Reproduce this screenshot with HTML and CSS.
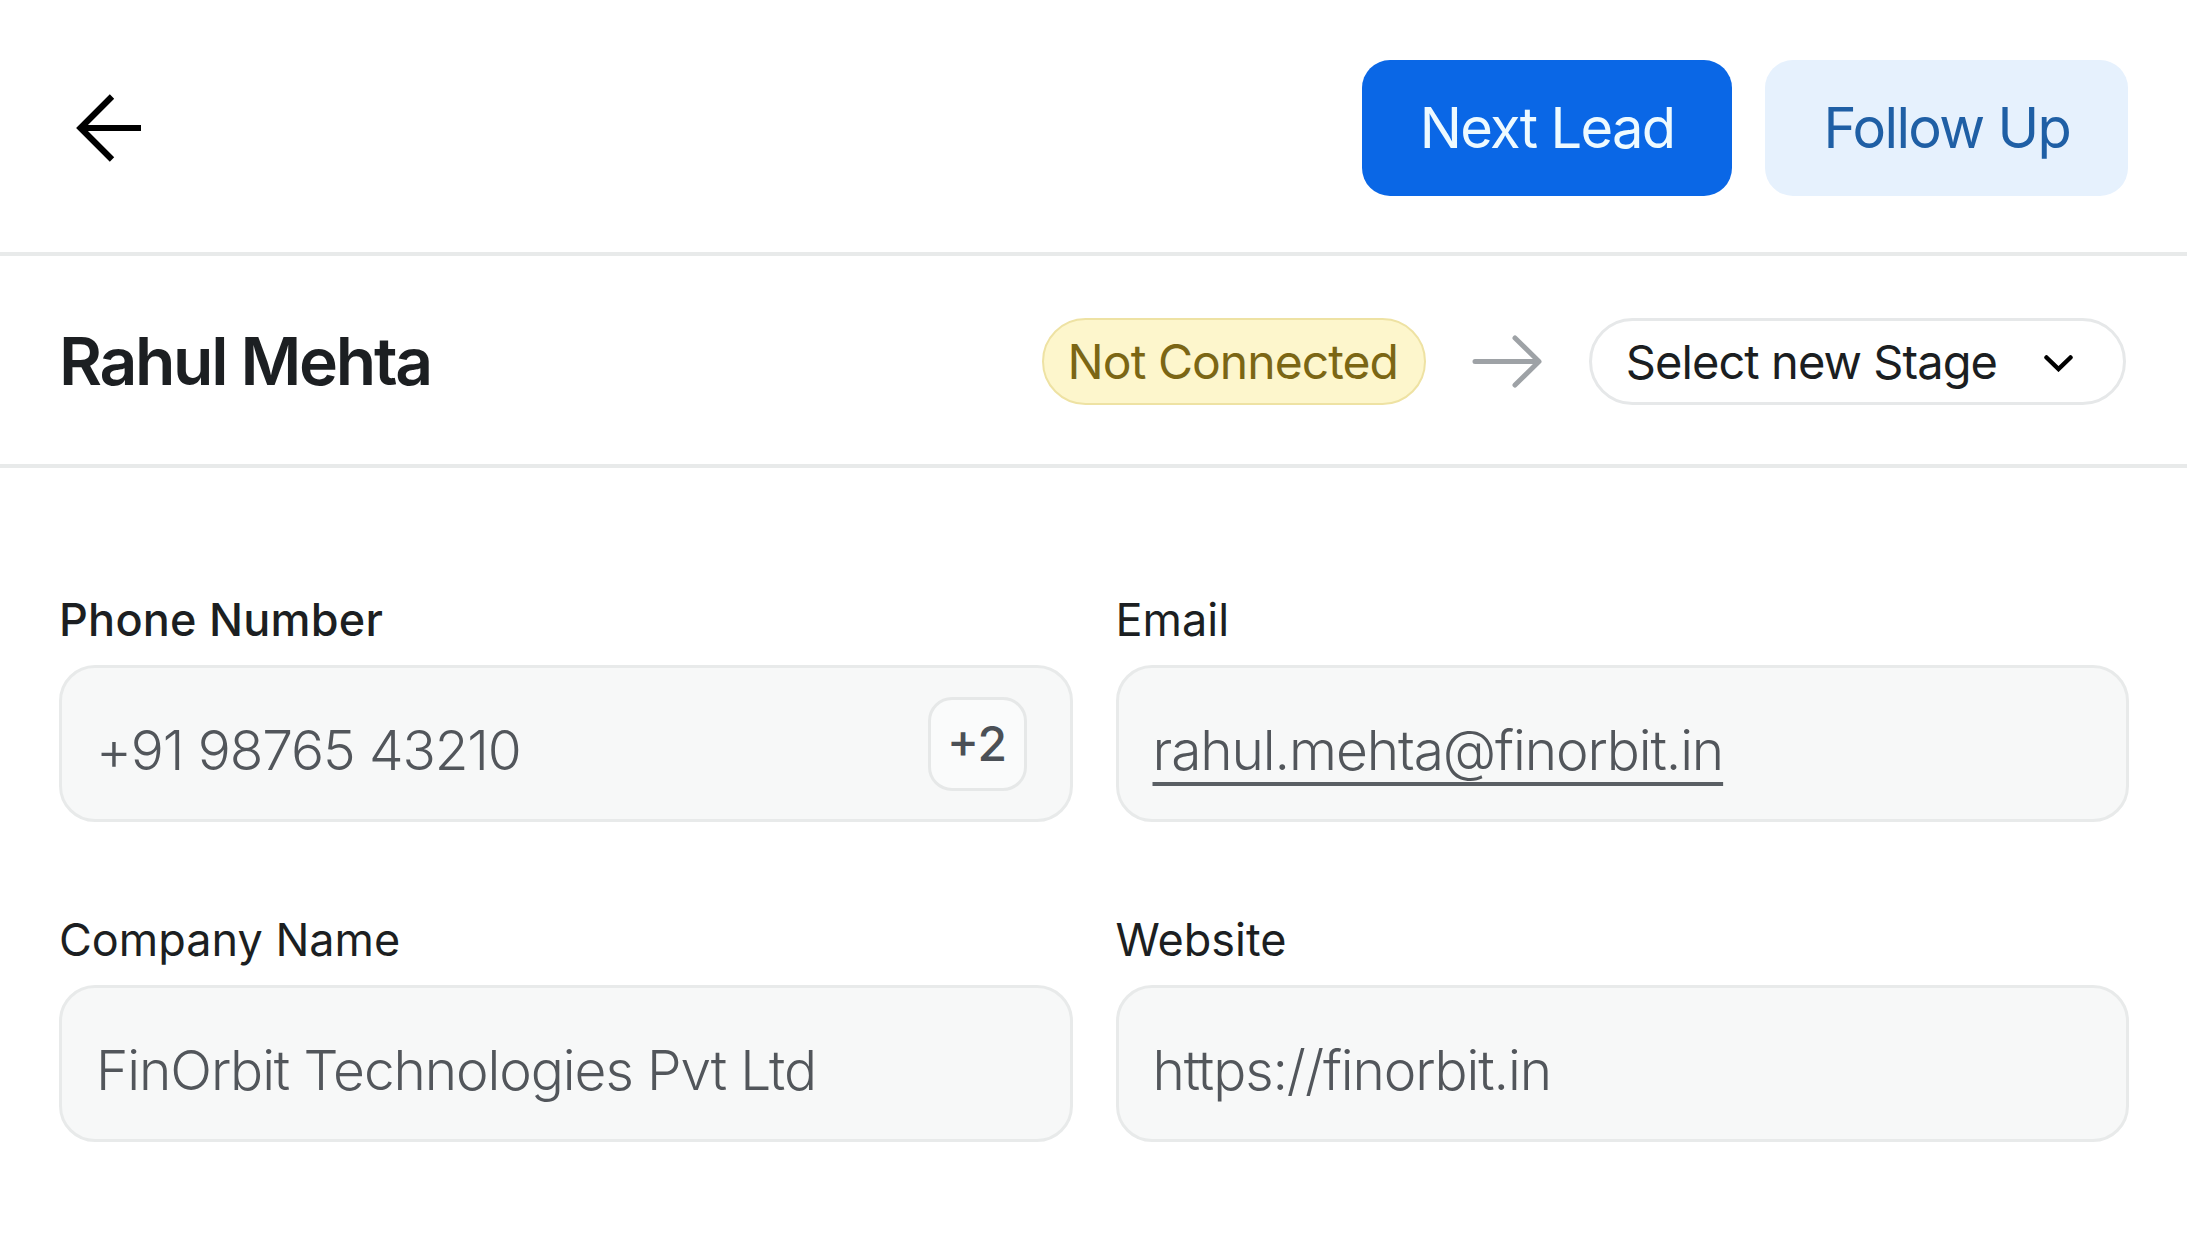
FILE: index.html
```html
<!DOCTYPE html>
<html lang="en">
<head>
<meta charset="utf-8">
<title>Lead – Rahul Mehta</title>
<link rel="stylesheet" href="styles.css">
</head>
<body>
<header class="topbar">
  <button class="back" aria-label="Back">
    <svg viewBox="0 0 96 96" width="96" height="96" aria-hidden="true">
      <path d="M80 48 H22 M51 16.5 L19.5 48 L51 79.5" fill="none" stroke="#000" stroke-width="6.2" stroke-linejoin="miter"/>
    </svg>
  </button>
  <div class="actions">
    <button class="btn btn-primary">Next Lead</button>
    <button class="btn btn-soft">Follow Up</button>
  </div>
</header>

<section class="lead-head">
  <h1 class="lead-name">Rahul Mehta</h1>
  <div class="stage">
    <span class="stage-pill">Not Connected</span>
    <svg class="stage-arrow" viewBox="0 0 71 53" width="71" height="53" aria-hidden="true">
      <path d="M3 26.5 H66 M43 3 L67 26.5 L43 50" fill="none" stroke="#9ea2a6" stroke-width="5" stroke-linecap="round" stroke-linejoin="round"/>
    </svg>
    <button class="stage-select">
      <span>Select new Stage</span>
      <svg viewBox="0 0 29 17" width="29" height="17" aria-hidden="true">
        <path d="M2.5 2.5 L14.5 14 L26.5 2.5" fill="none" stroke="#000" stroke-width="4.5" stroke-linecap="round" stroke-linejoin="miter"/>
      </svg>
    </button>
  </div>
</section>

<main class="fields">
  <div class="field">
    <label class="field-label field-label-strong">Phone Number</label>
    <div class="field-box">
      <span class="field-value">+91 98765 43210</span>
      <span class="chip">+2</span>
    </div>
  </div>
  <div class="field">
    <label class="field-label">Email</label>
    <div class="field-box">
      <span class="field-value field-link">rahul.mehta@finorbit.in</span>
    </div>
  </div>
  <div class="field">
    <label class="field-label">Company Name</label>
    <div class="field-box">
      <span class="field-value">FinOrbit Technologies Pvt Ltd</span>
    </div>
  </div>
  <div class="field">
    <label class="field-label">Website</label>
    <div class="field-box">
      <span class="field-value">https://finorbit.in</span>
    </div>
  </div>
</main>
</body>
</html>
```

FILE: styles.css
```css
* { box-sizing: border-box; }

html, body {
  margin: 0;
  padding: 0;
  background: #ffffff;
}

body {
  font-family: Inter, "Noto Sans", "Liberation Sans", sans-serif;
  color: #1c1f22;
}

button {
  font-family: inherit;
  cursor: pointer;
}

/* ---------- top bar ---------- */
.topbar {
  display: flex;
  align-items: center;
  justify-content: space-between;
  padding: 60px 59px 56px 61px;
  border-bottom: 4px solid #e8eaea;
}

.back {
  width: 96px;
  height: 96px;
  padding: 0;
  border: 0;
  background: transparent;
  display: flex;
}

.actions {
  display: flex;
  gap: 33px;
}

.btn {
  height: 136px;
  border: 0;
  border-radius: 28px;
  padding: 0 58px;
  font-size: 56px;
  font-weight: 400;
  letter-spacing: -0.03em;
}

.btn-primary {
  background: #0a67e6;
  color: #eefaff;
}

.btn-soft {
  background: #e6f1fd;
  color: #1f5fa5;
}

/* ---------- lead header ---------- */
.lead-head {
  display: flex;
  align-items: center;
  justify-content: space-between;
  padding: 62px 61px 59px 59px;
  border-bottom: 4px solid #e8eaea;
}

.lead-name {
  margin: 0;
  font-size: 66px;
  line-height: 87px;
  font-weight: 600;
  letter-spacing: -0.035em;
  color: #1c1f22;
}

.stage {
  display: flex;
  align-items: center;
  gap: 46px;
}

.stage-pill {
  height: 87px;
  display: inline-flex;
  align-items: center;
  padding: 0 26px 0 24px;
  border: 2px solid #eee2a3;
  border-radius: 44px;
  background: #fdf6cc;
  color: #7b6614;
  font-size: 48px;
  letter-spacing: -0.02em;
}

.stage-arrow {
  display: block;
}

.stage-select {
  height: 87px;
  display: flex;
  align-items: center;
  gap: 47px;
  padding: 0 50px 0 34px;
  border: 3px solid #e6e8e9;
  border-radius: 44px;
  background: #ffffff;
  color: #1b1e21;
  font-size: 47px;
  letter-spacing: -0.02em;
}

.stage-select svg {
  display: block;
  margin-top: 4px;
}

/* ---------- fields ---------- */
.fields {
  display: grid;
  grid-template-columns: 1fr 1fr;
  column-gap: 43px;
  row-gap: 92px;
  padding: 126px 58px 0 59px;
}

.field-label {
  display: block;
  margin-bottom: 19px;
  font-size: 45px;
  line-height: 52px;
  font-weight: 400;
  color: #1c1f22;
}

.field-label-strong {
  font-weight: 500;
  letter-spacing: 0.005em;
}

.field-box {
  height: 157px;
  display: flex;
  align-items: center;
  justify-content: space-between;
  padding: 0 43px 0 34px;
  border: 3px solid #e8eaea;
  border-radius: 36px;
  background: #f7f8f8;
}

.field-value {
  margin-top: 12px;
  font-size: 55px;
  font-weight: 300;
  letter-spacing: -0.02em;
  color: #52565b;
}

.field-link {
  text-decoration: underline;
  text-decoration-thickness: 4px;
  text-underline-offset: 12px;
  text-decoration-color: #5a5f64;
}

.chip {
  width: 99px;
  height: 94px;
  display: flex;
  align-items: center;
  justify-content: center;
  border: 3px solid #e6e8e8;
  border-radius: 24px;
  background: #fafbfb;
  color: #4b5056;
  font-size: 48px;
  font-weight: 500;
}
```
